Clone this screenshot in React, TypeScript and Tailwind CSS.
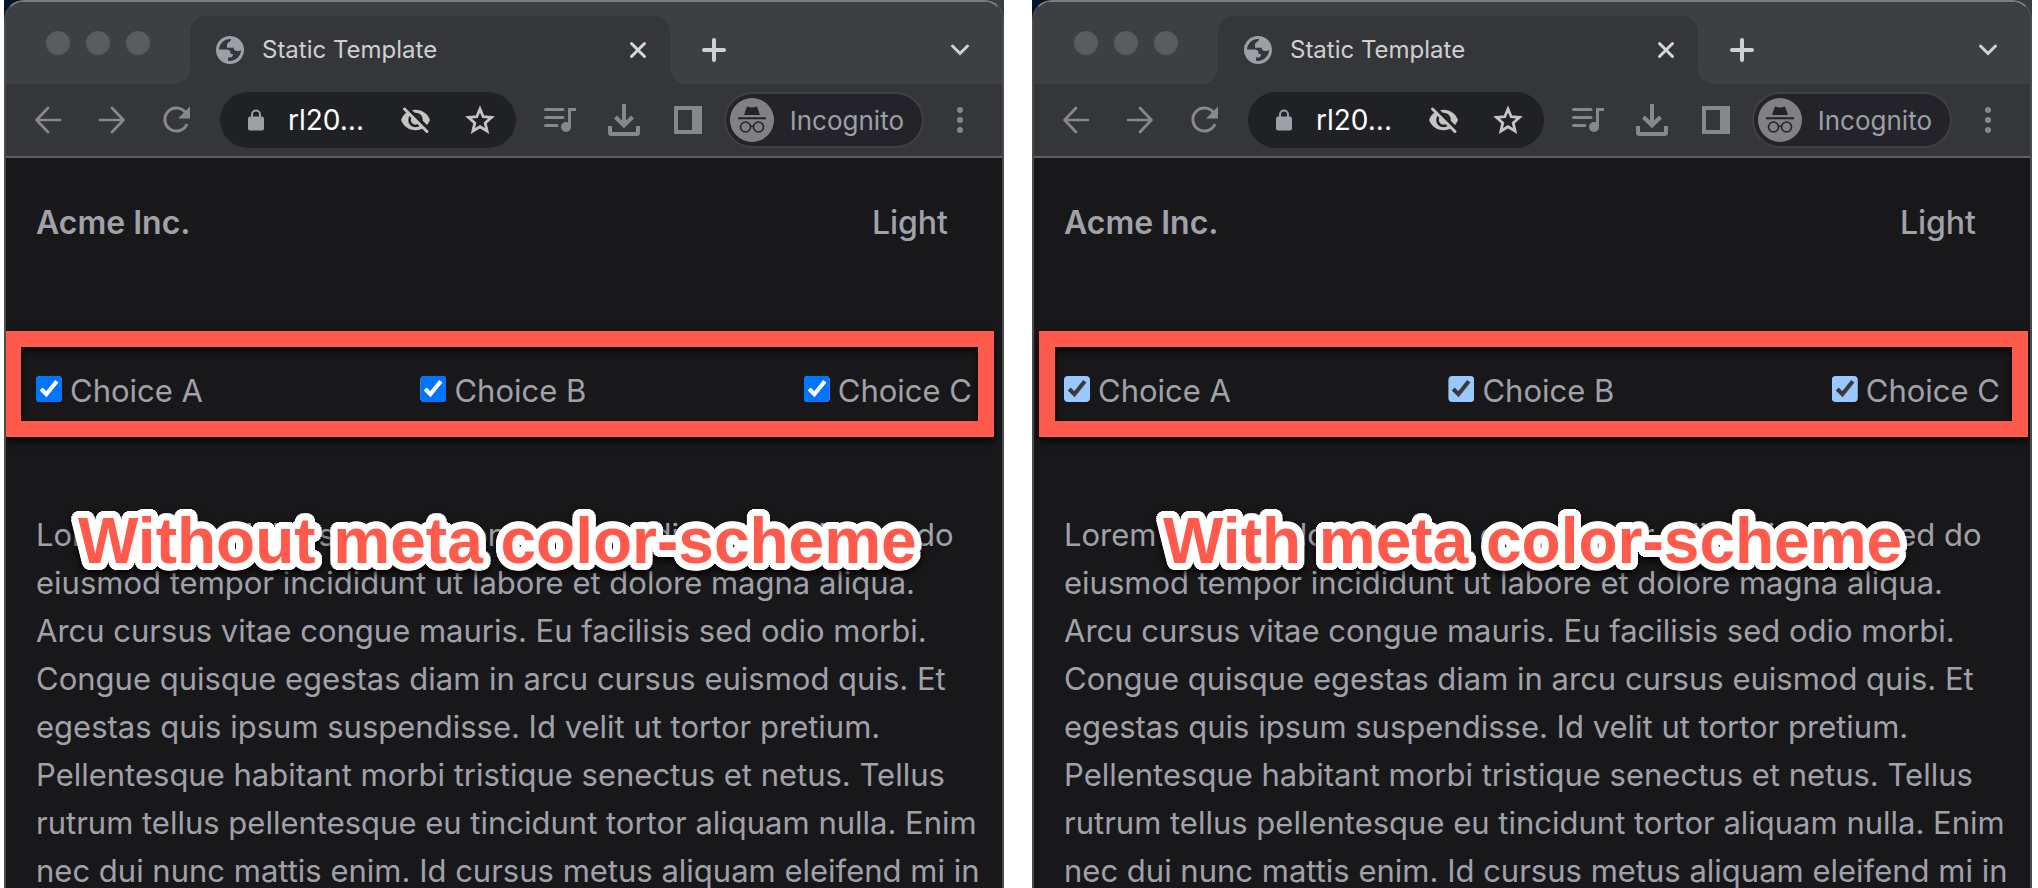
import type { ReactNode } from "react";

const LINES = [
  "Lorem ipsum dolor sit amet, consectetur adipiscing elit, sed do",
  "eiusmod tempor incididunt ut labore et dolore magna aliqua.",
  "Arcu cursus vitae congue mauris. Eu facilisis sed odio morbi.",
  "Congue quisque egestas diam in arcu cursus euismod quis. Et",
  "egestas quis ipsum suspendisse. Id velit ut tortor pretium.",
  "Pellentesque habitant morbi tristique senectus et netus. Tellus",
  "rutrum tellus pellentesque eu tincidunt tortor aliquam nulla. Enim",
  "nec dui nunc mattis enim. Id cursus metus aliquam eleifend mi in",
];

const CHOICES = ["Choice A", "Choice B", "Choice C"];

function IconButton({ label, children }: { label: string; children: ReactNode }) {
  return (
    <button type="button" aria-label={label} className="flex size-8 shrink-0 items-center justify-center">
      {children}
    </button>
  );
}

function Globe() {
  return (
    <svg className="size-7 shrink-0" viewBox="0 0 28 28">
      <circle cx="14" cy="14" r="14" fill="#9aa0a6" />
      <path
        d="M15 3C8.500 2.600 3.200 7.500 3 13.500h7.500c2.500 0 4 1.200 4 3v1.500h2c.800 0 .500 1.800-.500 2.800-.900.900-2.300.700-4 .700v3.300c7 1 13-4.300 13-10.800-1.200 1-2.600 1-4 1-2.200 0-3.300-1.300-3.300-3.300H11V8.800C11 6 15 6 15 3z"
        fill="#35363a"
      />
    </svg>
  );
}

function TabStrip() {
  return (
    <div className="flex h-[82px] bg-[#35363a]">
      <div className="flex w-46 shrink-0 gap-4 rounded-br-2xl bg-[#3c4043] pt-[29px] pl-10">
        <span className="size-6 rounded-full bg-[#5b5c60]" />
        <span className="size-6 rounded-full bg-[#5b5c60]" />
        <span className="size-6 rounded-full bg-[#5b5c60]" />
      </div>
      <div className="w-[480px] bg-[#3c4043] pt-3.5">
        <div className="flex h-full items-center rounded-t-2xl bg-[#35363a] pr-4 pl-[26px]">
          <Globe />
          <span className="ml-[18px] flex-1 text-[24px] leading-8 text-[#cfd0d2]">Static Template</span>
          <IconButton label="Close tab">
            <svg className="size-5" viewBox="0 0 20 20" fill="none" stroke="#d6d7d9" strokeWidth="3" strokeLinecap="round">
              <path d="M3.500 3.500l13 13M16.500 3.500l-13 13" />
            </svg>
          </IconButton>
        </div>
      </div>
      <div className="flex flex-1 items-center justify-between rounded-bl-2xl bg-[#3c4043] pt-3.5 pr-[26px] pl-7">
        <IconButton label="New tab">
          <svg className="size-6" viewBox="0 0 24 24" fill="none" stroke="#d0d1d5" strokeWidth="4" strokeLinecap="round">
            <path d="M12 2v20M2 12h20" />
          </svg>
        </IconButton>
        <IconButton label="Search tabs">
          <svg className="size-6" viewBox="0 0 24 24" fill="none" stroke="#d0d1d5" strokeWidth="3" strokeLinecap="round">
            <path d="M4.500 8l7.500 7.500L19.500 8" />
          </svg>
        </IconButton>
      </div>
    </div>
  );
}

function Toolbar() {
  return (
    <div className="flex h-[74px] items-center border-b-2 border-[#5f6063] bg-[#35363a] px-[26px]">
      <div className="flex shrink-0 gap-8">
        <IconButton label="Back">
          <svg className="size-8" viewBox="0 0 32 32" fill="none" stroke="#87888a" strokeWidth="2.600" strokeLinecap="round" strokeLinejoin="round">
            <path d="M28 16H4.500M16 4L4.500 16 16 28" />
          </svg>
        </IconButton>
        <IconButton label="Forward">
          <svg className="size-8" viewBox="0 0 32 32" fill="none" stroke="#87888a" strokeWidth="2.600" strokeLinecap="round" strokeLinejoin="round">
            <path d="M4 16h23.500M16 4l11.500 12L16 28" />
          </svg>
        </IconButton>
        <IconButton label="Reload">
          <svg className="size-8" viewBox="0 0 32 32" fill="none">
            <path d="M25.500 8.500A11.500 11.500 0 1 0 27 20" stroke="#87888a" strokeWidth="3" />
            <path d="M30 2.500V14.500H18z" fill="#87888a" />
          </svg>
        </IconButton>
      </div>
      <div className="ml-7 flex h-14 min-w-0 flex-1 items-center rounded-full bg-[#202124] pr-5 pl-7">
        <svg className="h-[22px] w-4 shrink-0" viewBox="0 0 16 22" fill="none">
          <path d="M4 9V5.500a4 4 0 0 1 8 0V9" stroke="#9aa0a6" strokeWidth="2" />
          <rect y="7.500" width="16" height="14" rx="2" fill="#9aa0a6" />
        </svg>
        <input
          aria-label="Address"
          defaultValue="rl20..."
          className="ml-6 w-0 min-w-0 flex-1 bg-transparent text-[28px] leading-9 text-white outline-none"
        />
        <div className="flex shrink-0 gap-8">
          <IconButton label="Third-party cookies blocked">
            <svg className="size-8" viewBox="0 0 32 32" fill="none">
              <path d="M1 16C3.500 9.500 9 5.800 15.500 5.800S27.500 9.500 30 16c-2.500 6.500-8 10.200-14.500 10.200S3.500 22.500 1 16z" fill="#c4c4c4" />
              <circle cx="15.500" cy="16" r="6" stroke="#202124" strokeWidth="2.600" />
              <path d="M6.500 3.500l23 23" stroke="#202124" strokeWidth="4" />
              <path d="M4.500 5l22.500 22.500" stroke="#c4c4c4" strokeWidth="3" strokeLinecap="round" />
            </svg>
          </IconButton>
          <IconButton label="Bookmark">
            <svg className="size-8" viewBox="0 0 32 32" fill="none" stroke="#c4c4c4" strokeWidth="2.800">
              <path d="M16 5l3.200 7.700 8.300.700-6.300 5.500 1.900 8.100-7.100-4.300L8.900 27l1.900-8.100-6.300-5.500 8.300-.700z" />
            </svg>
          </IconButton>
        </div>
      </div>
      <div className="ml-7 flex shrink-0 gap-8">
        <IconButton label="Media controls">
          <svg className="size-8" viewBox="0 0 32 32" fill="none" stroke="#87888a" strokeWidth="3" strokeLinecap="round">
            <path d="M1.500 5.500H19M1.500 13.500H19M1.500 21.500H13" />
            <path d="M25.500 23V5.500H31" strokeLinecap="square" />
            <circle cx="22" cy="23" r="5" fill="#87888a" stroke="none" />
          </svg>
        </IconButton>
        <IconButton label="Downloads">
          <svg className="size-8" viewBox="0 0 32 32" fill="none" stroke="#87888a" strokeWidth="4">
            <path d="M16 0v21M7.500 13l8.500 8.500 8.500-8.500" />
            <path d="M2 22v6.500a1.500 1.500 0 0 0 1.500 1.500h25a1.500 1.500 0 0 0 1.500-1.500V22" />
          </svg>
        </IconButton>
        <IconButton label="Side panel">
          <svg className="size-7" viewBox="0 0 28 28" fill="#87888a">
            <path fillRule="evenodd" d="M0 0h28v28H0zM4 4v20h14V4z" />
          </svg>
        </IconButton>
      </div>
      <button
        type="button"
        className="ml-5 flex h-14 shrink-0 items-center rounded-full border-2 border-[#3f4045] bg-[#242329] pr-[18px] pl-1 text-[26px] leading-8 text-[#9aa0a6]"
      >
        <svg className="mr-4 size-11" viewBox="0 0 44 44" fill="none">
          <circle cx="22" cy="22" r="22" fill="#808184" />
          <path d="M8 19.200h28v2H8zM14 17l3-8.500 3 .700q2 .600 4 0l3-.700L30 17z" fill="#242329" />
          <path d="M10.500 29a5 5 0 1 0 10 0 5 5 0 1 0-10 0zM23.500 29a5 5 0 1 0 10 0 5 5 0 1 0-10 0zM20.500 28.500q1.500-1 3 0" stroke="#242329" strokeWidth="1.600" />
        </svg>
        <span className="pt-0.5">Incognito</span>
      </button>
      <div className="ml-5 shrink-0">
        <IconButton label="Menu">
          <svg className="size-8" viewBox="0 0 32 32" fill="#87888a">
            <circle cx="16" cy="6" r="3" />
            <circle cx="16" cy="16" r="3" />
            <circle cx="16" cy="26" r="3" />
          </svg>
        </IconButton>
      </div>
    </div>
  );
}

interface BrowserProps {
  caption: string;
  captionClass: string;
  frameClass: string;
  schemeClass: string;
}

function Browser({ caption, captionClass, frameClass, schemeClass }: BrowserProps) {
  return (
    <section className="min-w-0 flex-1 bg-linear-to-r from-[#00172b] to-[#3a3c3e]">
      <div className="min-h-full overflow-hidden rounded-t-[20px] border-x-2 border-t-2 border-x-[#4b4c4e] border-t-[#7b7e81] bg-[#18181a]">
        <TabStrip />
        <Toolbar />
        <div className="pt-[41px] text-[31px] leading-[48px] text-[#a1a1aa]">
          <header className="flex items-center justify-between pr-[54px] pl-[30px] text-[32px] font-semibold">
            <span>Acme Inc.</span>
            <button type="button" className="font-medium">
              Light
            </button>
          </header>
          <div className="relative mt-30 flex justify-between px-[30px]">
            {CHOICES.map((choice) => (
              <label key={choice} className="flex items-center gap-2">
                <input
                  type="checkbox"
                  defaultChecked
                  className={`mb-1 size-[26px] [clip-path:inset(0_round_4px)] ${schemeClass}`}
                />
                {choice}
              </label>
            ))}
            <div
              className={`pointer-events-none absolute -top-9 -bottom-[22px] border-16 border-[#ff5a4c] drop-shadow-[0_4px_3px_rgba(0,0,0,0.8)] ${frameClass}`}
            />
          </div>
          <div className="relative mt-24 px-[30px]">
            <p>
              {LINES.map((line) => (
                <span key={line} className="block whitespace-nowrap">
                  {line}
                </span>
              ))}
            </p>
            <h2
              className={`absolute -top-1.5 font-['Liberation_Sans',Arial,sans-serif] text-[64px] leading-[72px] font-bold whitespace-nowrap text-[#ff5a4c] drop-shadow-[0_4px_3px_rgba(0,0,0,0.8)] [text-shadow:7px_0_#fff,7px_2px_#fff,6px_4px_#fff,5px_5px_#fff,4px_6px_#fff,2px_7px_#fff,0_7px_#fff,-2px_7px_#fff,-4px_6px_#fff,-5px_5px_#fff,-6px_4px_#fff,-7px_2px_#fff,-7px_0_#fff,-7px_-2px_#fff,-6px_-4px_#fff,-5px_-5px_#fff,-4px_-6px_#fff,-2px_-7px_#fff,0_-7px_#fff,2px_-7px_#fff,4px_-6px_#fff,5px_-5px_#fff,6px_-4px_#fff,7px_-2px_#fff] ${captionClass}`}
            >
              {caption}
            </h2>
          </div>
        </div>
      </div>
    </section>
  );
}

export default function App() {
  return (
    <main className="flex h-screen gap-7 overflow-hidden bg-white pr-1.5 pl-1 font-[Inter,sans-serif]">
      <Browser
        caption="Without meta color-scheme"
        captionClass="left-[72px]"
        frameClass="-left-px right-2"
        schemeClass="[color-scheme:light]"
      />
      <Browser
        caption="With meta color-scheme"
        captionClass="left-[129px]"
        frameClass="left-[5px] right-0.5"
        schemeClass="[color-scheme:dark]"
      />
    </main>
  );
}
